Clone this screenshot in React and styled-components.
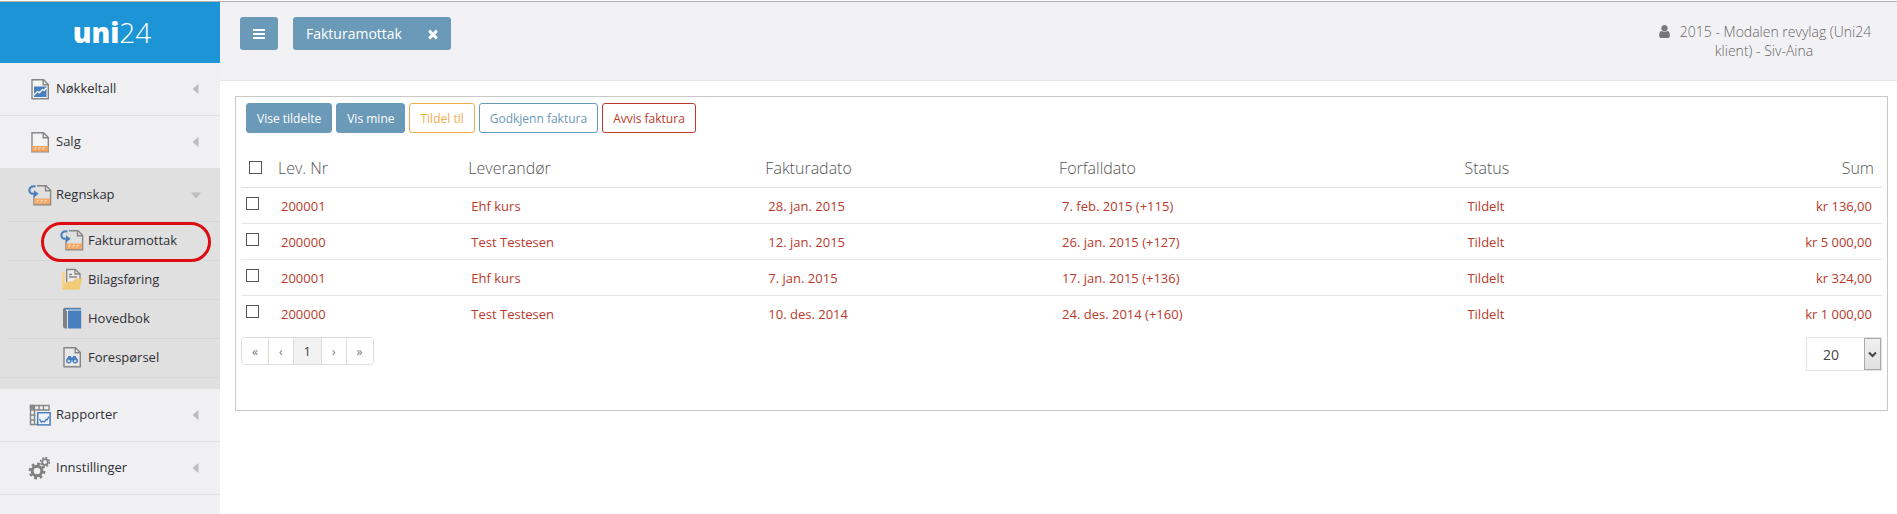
import { useState } from 'react';
import styled, { createGlobalStyle, css } from 'styled-components';

const invoices = [
    { id: 1, supplierNo: '200001', supplier: 'Ehf kurs', date: '28. jan. 2015', due: '7. feb. 2015 (+115)', status: 'Tildelt', sum: 'kr 136,00' },
    { id: 2, supplierNo: '200000', supplier: 'Test Testesen', date: '12. jan. 2015', due: '26. jan. 2015 (+127)', status: 'Tildelt', sum: 'kr 5 000,00' },
    { id: 3, supplierNo: '200001', supplier: 'Ehf kurs', date: '7. jan. 2015', due: '17. jan. 2015 (+136)', status: 'Tildelt', sum: 'kr 324,00' },
    { id: 4, supplierNo: '200000', supplier: 'Test Testesen', date: '10. des. 2014', due: '24. des. 2014 (+160)', status: 'Tildelt', sum: 'kr 1 000,00' },
];

function PageOutline({ fill = 'none' }) {
    return (
        <>
            <path d="M4 2.7h11.5l4.8 4.8v14.3H4z" fill={fill} stroke="#868686" strokeWidth="1.4" />
            <path d="M15.2 3v4.8h4.8" fill="none" stroke="#868686" strokeWidth="1.4" />
        </>
    );
}

function KeyFiguresIcon() {
    return (
        <Icon viewBox="0 0 24 24" aria-hidden="true">
            <PageOutline fill="#f3f3f4" />
            <rect x="6" y="9.5" width="12.5" height="10.5" fill="#4a7fbd" />
            <path d="M6 18l3.5-3.4 2 1 3-3 1.5.8 2.5-2.6" fill="none" stroke="#fff" strokeWidth="1.3" />
        </Icon>
    );
}

function InvoiceIcon() {
    return (
        <Icon viewBox="0 0 24 24" aria-hidden="true">
            <PageOutline fill="#f3f3f4" />
            <rect x="4" y="16" width="16.5" height="5.6" fill="#f4a460" />
            <path d="M7 20v-2.4h2M11 20v-2.4h2M15 20v-2.4h2" fill="none" stroke="#fbd9b8" />
        </Icon>
    );
}

function IncomingInvoiceIcon() {
    return (
        <Icon viewBox="0 0 24 24" aria-hidden="true">
            <path d="M9 2.7h9l4.6 4.6v14.5H6V12" fill="none" stroke="#868686" strokeWidth="1.4" />
            <path d="M17.5 3v4.8h4.8" fill="none" stroke="#868686" strokeWidth="1.4" />
            <rect x="6.2" y="15.5" width="16" height="5.8" fill="#f5a765" />
            <path d="M9 19.8v-2.4h2M13 19.8v-2.4h2M17 19.8v-2.4h2" fill="none" stroke="#fbd9b8" />
            <path d="M7.5 3.5C3 2.6.8 5.6 1.5 8.2 2 10 4 11 6.5 10.800" fill="none" stroke="#4a7fbd" strokeWidth="2" />
            <path d="M6 7.2l4.600 3.600L6 14.400z" fill="#4a7fbd" />
        </Icon>
    );
}

function VoucherIcon() {
    return (
        <Icon viewBox="0 0 24 24" aria-hidden="true">
            <path d="M2 5h3v15L2 22.500z" fill="#f7d58c" />
            <path d="M6.700 15V2.500h8.500l4.800 4.500v5" fill="#ececec" stroke="#868686" strokeWidth="1.4" />
            <path d="M15 2.500v4.500h5M9 7.500h3M9 10h8" fill="none" stroke="#868686" strokeWidth="1.3" />
            <path d="M2 22.800l4.500-8h6l3-3.200h7l-3.200 11.200z" fill="#f1cb77" />
        </Icon>
    );
}

function LedgerIcon() {
    return (
        <Icon viewBox="0 0 24 24" aria-hidden="true">
            <path d="M5 1.700h16v2.200H7v18.600H5.500A2.500 2.500 0 0 1 3 20V3.700a2 2 0 0 1 2-2z" fill="#7d8288" />
            <path d="M6 3h15v2H6z" fill="#e9edf2" />
            <path d="M8 4.500h13.200v18H8z" fill="#4a7fbd" />
            <path d="M4.500 3h16.500" stroke="#4a7fbd" strokeWidth="1.2" />
        </Icon>
    );
}

function InquiryIcon() {
    return (
        <Icon viewBox="0 0 24 24" aria-hidden="true">
            <PageOutline fill="#e8e8e8" />
            <path d="M8.500 11h2.300l.6 1.500h1.200l.6-1.500h2.300l2.400 4.500H6.100z" fill="#4a7fbd" />
            <circle cx="8.8" cy="15.8" r="2.7" fill="#4a7fbd" />
            <circle cx="15.2" cy="15.8" r="2.7" fill="#4a7fbd" />
            <circle cx="8.8" cy="16" r="1.2" fill="#cfdcec" />
            <circle cx="15.2" cy="16" r="1.2" fill="#cfdcec" />
        </Icon>
    );
}

function ReportsIcon() {
    return (
        <Icon viewBox="0 0 24 24" aria-hidden="true">
            <path d="M2.500 2.500H21v4.500H2.500zM2.500 7v14.500H9M6.500 2.500v19M11 2.500V7M15.500 2.500V7M2.500 12h5M2.500 17h5" fill="none" stroke="#868686" strokeWidth="1.4" />
            <rect x="1.8" y="1.8" width="4.5" height="4.5" fill="#868686" />
            <rect x="9.7" y="9.7" width="12.4" height="12.2" fill="#eef3f9" stroke="#4a7fbd" strokeWidth="1.5" />
            <path d="M11.500 16l2 3.200 1.500-1 1.500.6 1.500-2.300 1 .3 2-3.300" fill="none" stroke="#4a7fbd" strokeWidth="1.4" />
        </Icon>
    );
}

function SettingsIcon() {
    return (
        <Icon viewBox="0 0 24 24" aria-hidden="true">
            <g fill="none" stroke="#808080">
                <circle cx="9" cy="15" r="4.8" strokeWidth="3" />
                <circle cx="9" cy="15" r="7.2" strokeWidth="2.4" strokeDasharray="2.8 2.85" />
                <circle cx="17" cy="6" r="2.8" strokeWidth="1.8" />
                <circle cx="17" cy="6" r="4.4" strokeWidth="1.6" strokeDasharray="1.8 1.65" />
            </g>
        </Icon>
    );
}

function Caret({ open }) {
    return (
        <CaretSvg viewBox="0 0 10 10" aria-hidden="true">
            {open ? <path d="M0 2.500h10L5.800 7.700q-.8.700-1.600 0z" /> : <path d="M7.500 0v10L2.300 5.800q-.7-.8 0-1.600z" />}
        </CaretSvg>
    );
}

function MenuItem({ icon, label, open, children }) {
    return (
        <MenuEntry $open={open}>
            <MenuLink href="#" aria-expanded={!!open}>
                {icon}
                <span>{label}</span>
                <Caret open={open} />
            </MenuLink>
            {children}
        </MenuEntry>
    );
}

function Sidebar() {
    return (
        <SidebarContainer>
            <Brand href="#" aria-label="uni24">
                <BrandName>uni</BrandName>
                <BrandNumber>24</BrandNumber>
            </Brand>
            <nav>
                <MenuList>
                    <MenuItem icon={<KeyFiguresIcon />} label="Nøkkeltall" />
                    <MenuItem icon={<InvoiceIcon />} label="Salg" />
                    <MenuItem icon={<IncomingInvoiceIcon />} label="Regnskap" open>
                        <SubMenu>
                            <SubEntry $marked>
                                <SubLink href="#" aria-current="page"><IncomingInvoiceIcon />Fakturamottak</SubLink>
                            </SubEntry>
                            <SubEntry>
                                <SubLink href="#"><VoucherIcon />Bilagsføring</SubLink>
                            </SubEntry>
                            <SubEntry>
                                <SubLink href="#"><LedgerIcon />Hovedbok</SubLink>
                            </SubEntry>
                            <SubEntry>
                                <SubLink href="#"><InquiryIcon />Forespørsel</SubLink>
                            </SubEntry>
                        </SubMenu>
                    </MenuItem>
                    <MenuItem icon={<ReportsIcon />} label="Rapporter" />
                    <MenuItem icon={<SettingsIcon />} label="Innstillinger" />
                </MenuList>
            </nav>
        </SidebarContainer>
    );
}

function Header() {
    return (
        <HeaderContainer>
            <MenuButton aria-label="Meny">
                <svg width="14" height="14" viewBox="0 0 14 14" fill="currentColor" aria-hidden="true">
                    <rect x="1" y="2" width="12" height="2" />
                    <rect x="1" y="6" width="12" height="2" />
                    <rect x="1" y="10" width="12" height="2" />
                </svg>
            </MenuButton>
            <Tab>
                <TabLink href="#">Fakturamottak</TabLink>
                <TabClose aria-label="Lukk">
                    <svg width="14" height="14" viewBox="0 0 1792 1792" fill="currentColor" aria-hidden="true">
                        <path d="M1490 1322q0 40-28 68l-136 136q-28 28-68 28t-68-28l-294-294-294 294q-28 28-68 28t-68-28l-136-136q-28-28-28-68t28-68l294-294-294-294q-28-28-28-68t28-68l136-136q28-28 68-28t68 28l294 294 294-294q28-28 68-28t68 28l136 136q28 28 28 68t-28 68l-294 294 294 294q28 28 28 68z" />
                    </svg>
                </TabClose>
            </Tab>
            <Client href="#">
                <UserSvg viewBox="0 0 1792 1792" aria-hidden="true">
                    <path d="M1536 1399q0 109-62.500 187t-150.500 78h-854q-88 0-150.500-78t-62.500-187q0-85 8.500-160.500t31.500-152 58.500-131 94-89 134.500-34.500q131 128 313 128t313-128q76 0 134.500 34.500t94 89 58.500 131 31.500 152 8.500 160.500zm-256-887q0 159-112.500 271.500t-271.500 112.500-271.500-112.500-112.500-271.500 112.500-271.500 271.500-112.500 271.500 112.500 112.500 271.500z" />
                </UserSvg>
                2015 - Modalen revylag (Uni24 klient) - Siv-Aina
            </Client>
        </HeaderContainer>
    );
}

function InvoiceTable() {
    const [selected, setSelected] = useState([]);

    const toggle = (id) => {
        setSelected(selected.includes(id) ? selected.filter((item) => item !== id) : [...selected, id]);
    };

    const toggleAll = () => {
        setSelected(selected.length === invoices.length ? [] : invoices.map(({ id }) => id));
    };

    return (
        <Table>
            <colgroup>
                <Col $width="29px" />
                <Col $width="11.6%" />
                <Col $width="18.1%" />
                <Col $width="17.9%" />
                <Col $width="24.7%" />
                <Col />
                <Col $width="12%" />
            </colgroup>
            <thead>
                <tr>
                    <HeadCheckCell>
                        <Checkbox aria-label="Velg alle" checked={selected.length === invoices.length} onChange={toggleAll} />
                    </HeadCheckCell>
                    <HeadCell>Lev. Nr</HeadCell>
                    <HeadCell>Leverandør</HeadCell>
                    <HeadCell>Fakturadato</HeadCell>
                    <HeadCell>Forfalldato</HeadCell>
                    <HeadCell>Status</HeadCell>
                    <HeadCell $right>Sum</HeadCell>
                </tr>
            </thead>
            <tbody>
                {invoices.map(({ id, supplierNo, supplier, date, due, status, sum }) => (
                    <Row key={id}>
                        <CheckCell>
                            <Checkbox aria-label={`Velg ${supplierNo}, ${date}`} checked={selected.includes(id)} onChange={() => toggle(id)} />
                        </CheckCell>
                        <Cell>{supplierNo}</Cell>
                        <Cell>{supplier}</Cell>
                        <Cell>{date}</Cell>
                        <Cell>{due}</Cell>
                        <Cell>{status}</Cell>
                        <Cell $right>{sum}</Cell>
                    </Row>
                ))}
            </tbody>
        </Table>
    );
}

export default function App() {
    return (
        <>
            <GlobalStyle />
            <Page>
                <Sidebar />
                <Main>
                    <Header />
                    <Panel>
                        <Toolbar>
                            <ActionButton $color="#6b9ab8" $filled>Vise tildelte</ActionButton>
                            <ActionButton $color="#6b9ab8" $filled>Vis mine</ActionButton>
                            <ActionButton $color="#f0ad4e">Tildel til</ActionButton>
                            <ActionButton $color="#6b9ab8">Godkjenn faktura</ActionButton>
                            <ActionButton $color="#b93a2b">Avvis faktura</ActionButton>
                        </Toolbar>
                        <InvoiceTable />
                        <TableFooter>
                            <Pagination aria-label="Sider">
                                <PageButton aria-label="Første">«</PageButton>
                                <PageButton aria-label="Forrige">‹</PageButton>
                                <PageButton $current aria-current="page">1</PageButton>
                                <PageButton aria-label="Neste">›</PageButton>
                                <PageButton aria-label="Siste">»</PageButton>
                            </Pagination>
                            <SelectWrapper>
                                <Select aria-label="Rader per side" defaultValue="20">
                                    <option>10</option>
                                    <option>20</option>
                                    <option>50</option>
                                </Select>
                                <SelectArrow>
                                    <svg width="9" height="7" viewBox="0 0 9 7" aria-hidden="true">
                                        <path d="M1 1.500l3.500 3.500L8 1.500" fill="none" stroke="#444" strokeWidth="2" />
                                    </svg>
                                </SelectArrow>
                            </SelectWrapper>
                        </TableFooter>
                    </Panel>
                </Main>
            </Page>
        </>
    );
}

const GlobalStyle = createGlobalStyle`
    * {
        box-sizing: border-box;
    }

    body {
        margin: 0;
        padding-top: 1px;
        font-family: 'Open Sans', 'Noto Sans', sans-serif;
        font-size: 13px;
        color: #676a6c;
        background-color: #ffffff;
    }

    button, select, input {
        font-family: inherit;
    }

    button {
        cursor: pointer;
    }

    a {
        color: inherit;
        text-decoration: none;
    }
`;

const Page = styled.div`
    display: flex;
    min-height: calc(100vh - 1px);
    border-top: 1px solid #b0b0b3;
`;

const SidebarContainer = styled.aside`
    width: 220px;
    flex-shrink: 0;
    background-color: #f0f0f2;
`;

const Brand = styled.a`
    height: 61px;
    padding-left: 4px;
    display: flex;
    justify-content: center;
    align-items: baseline;
    line-height: 60px;
    color: #ffffff;
    background-color: #1c94d6;
`;

const BrandName = styled.span`
    font-size: 28px;
    font-weight: 800;
`;

const BrandNumber = styled.span`
    font-size: 28px;
    font-weight: 300;
`;

const MenuList = styled.ul`
    margin: 0;
    padding: 0;
    list-style: none;
`;

const MenuEntry = styled.li`
    border-bottom: 1px solid #e2e2e4;

    ${({ $open }) => $open && css`
        padding-bottom: 10px;
        background-color: #e0e0e0;
    `}
`;

const MenuLink = styled.a`
    height: 52px;
    padding: 0px 19px 0px 28px;
    display: flex;
    align-items: center;
    gap: 4px;
    color: #2f2f35;

    > span {
        padding-bottom: 2px;
        flex-grow: 1;
    }
`;

const Icon = styled.svg`
    width: 24px;
    height: 24px;
    flex-shrink: 0;
`;

const CaretSvg = styled.svg`
    width: 10px;
    height: 10px;
    fill: #bdbdbf;
`;

const SubMenu = styled.ul`
    margin: 0;
    padding: 0px 0px 0px 8px;
    list-style: none;
    border-bottom: 1px solid #d9d9d9;
`;

const SubEntry = styled.li`
    position: relative;
    border-top: 1px solid #d6d6d6;

    ${({ $marked }) => $marked && css`
        z-index: 1;

        &::after {
            content: '';
            position: absolute;
            top: 0;
            bottom: -2px;
            left: 33px;
            right: 9px;
            border: 3px solid #dc0d12;
            border-radius: 24px;
            pointer-events: none;
        }
    `}
`;

const SubLink = styled.a`
    height: 38px;
    padding: 0px 0px 2px 52px;
    display: flex;
    align-items: center;
    gap: 4px;
    color: #2f2f35;
`;

const Main = styled.main`
    flex-grow: 1;
    min-width: 0;
`;

const HeaderContainer = styled.header`
    height: 79px;
    padding: 15px 20px;
    display: flex;
    align-items: flex-start;
    gap: 15px;
    background-color: #f2f2f4;
    border-bottom: 1px solid #e4e5e6;
`;

const MenuButton = styled.button`
    width: 38px;
    height: 33px;
    padding: 0;
    display: flex;
    justify-content: center;
    align-items: center;
    border: 0;
    border-radius: 3px;
    color: #ffffff;
    background-color: #6b9ab8;
`;

const Tab = styled.div`
    height: 33px;
    padding: 0px 11px 0px 13px;
    display: flex;
    align-items: center;
    gap: 24px;
    border-radius: 3px;
    color: #ffffff;
    background-color: #6b9ab8;
`;

const TabLink = styled.a`
    font-size: 14px;
    font-weight: 500;
`;

const TabClose = styled.button`
    padding: 0;
    display: flex;
    border: 0;
    color: inherit;
    background: none;
`;

const Client = styled.a`
    width: 226px;
    margin-left: auto;
    padding-top: 5px;
    font-size: 14px;
    font-weight: 300;
    line-height: 19px;
    text-align: center;
    color: #666666;
`;

const UserSvg = styled.svg`
    width: 15px;
    height: 15px;
    margin-right: 8px;
    vertical-align: -2px;
    fill: #777777;
`;

const Panel = styled.section`
    margin: 15px 9px 0px 15px;
    padding: 6px 5px 39px 5px;
    border: 1px solid #c8c8c8;
    background-color: #ffffff;
`;

const Toolbar = styled.div`
    padding: 0px 5px;
    display: flex;
    gap: 4px;
`;

const ActionButton = styled.button`
    height: 30px;
    padding: 0px 10px;
    font-size: 12px;
    font-weight: ${({ $filled }) => $filled ? 500 : 400};
    color: ${({ $color, $filled }) => $filled ? '#ffffff' : $color};
    background-color: ${({ $color, $filled }) => $filled ? $color : '#ffffff'};
    border: 1px solid ${({ $color }) => $color};
    border-radius: 3px;
`;

const Table = styled.table`
    width: 100%;
    margin-top: 16px;
    table-layout: fixed;
    border-collapse: collapse;
`;

const Col = styled.col`
    width: ${({ $width }) => $width || 'auto'};
`;

const HeadCell = styled.th`
    height: 38px;
    padding: 0px 8px;
    font-size: 16px;
    font-weight: 300;
    text-align: ${({ $right }) => $right ? 'right' : 'left'};
    color: #555555;
    border-bottom: 1px solid #dddddd;
`;

const HeadCheckCell = styled(HeadCell)`
    font-size: 0;
`;

const Row = styled.tr`
    &:not(:last-child) > td {
        border-bottom: 1px solid #e7e7e7;
    }
`;

const Cell = styled.td`
    height: 36px;
    padding: 2px 10px 0px 11px;
    text-align: ${({ $right }) => $right ? 'right' : 'left'};
    color: #b93a2b;
`;

const CheckCell = styled(Cell)`
    padding: 9px 5px;
    vertical-align: top;
    font-size: 0;
`;

const Checkbox = styled.input.attrs({ type: 'checkbox' })`
    appearance: none;
    width: 13px;
    height: 13px;
    margin: 0;
    border: 1px solid #555555;
    background-color: #ffffff;

    &:checked {
        background-color: #6b9ab8;
        box-shadow: inset 0px 0px 0px 2px #ffffff;
    }
`;

const TableFooter = styled.div`
    padding-top: 6px;
    display: flex;
    justify-content: space-between;
    align-items: flex-start;
`;

const Pagination = styled.nav`
    display: flex;
    border: 1px solid #dddddd;
    border-radius: 4px;
    overflow: hidden;
`;

const PageButton = styled.button`
    height: 26px;
    padding: 0px 10px;
    font-size: ${({ $current }) => $current ? '13px' : '12px'};
    color: ${({ $current }) => $current ? '#444444' : '#777777'};
    background-color: ${({ $current }) => $current ? '#f2f2f2' : '#ffffff'};
    border: 0;

    & + & {
        border-left: 1px solid #dddddd;
    }
`;

const SelectWrapper = styled.div`
    position: relative;
    width: 76px;
`;

const Select = styled.select`
    appearance: none;
    width: 100%;
    height: 34px;
    padding: 0px 16px;
    font-size: 14px;
    color: #444444;
    background-color: #ffffff;
    border: 1px solid #e2e3e4;
    border-radius: 0;
`;

const SelectArrow = styled.span`
    position: absolute;
    top: 1px;
    bottom: 1px;
    right: 1px;
    width: 17px;
    display: flex;
    justify-content: center;
    align-items: center;
    border: 1px solid #a9a9a9;
    background: linear-gradient(#f0f0f0, #e0e0e0);
    pointer-events: none;
`;
